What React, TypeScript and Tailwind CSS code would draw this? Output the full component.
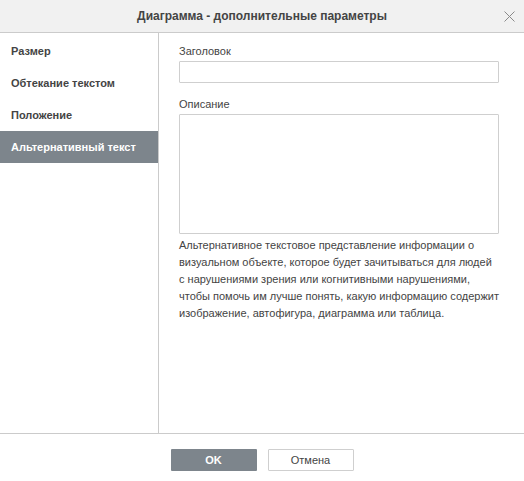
export default function App() {
  const items = ["Размер", "Обтекание текстом", "Положение", "Альтернативный текст"];
  const active = 3;

  return (
    <div className="w-[524px] h-[481px] bg-white flex flex-col text-[#444] font-['Liberation_Sans',Arial,sans-serif] text-[11px]">
      <div className="relative h-[33px] shrink-0 bg-[#f1f1f1] border-b border-[#cbcbcb] flex items-center justify-center">
        <span className="text-[12px] font-bold text-[#444]">Диаграмма - дополнительные параметры</span>
        <svg className="absolute right-[9px] top-[11px]" width="11" height="11" viewBox="0 0 11 11">
          <path d="M0.5 0.5 L10.5 10.5 M10.5 0.5 L0.5 10.5" stroke="#8a8a8a" strokeWidth="1" fill="none" />
        </svg>
      </div>

      <div className="flex flex-1 border-b border-[#cbcbcb]">
        <div className="w-[159px] shrink-0 border-r border-[#cbcbcb] pt-[2px] flex flex-col">
          {items.map((label, i) => (
            <div
              key={label}
              className={
                i === active
                  ? "h-[32px] flex items-center pl-[11px] font-bold bg-[#7d858c] text-white"
                  : "h-[32px] flex items-center pl-[11px] font-bold text-[#444]"
              }
            >
              {label}
            </div>
          ))}
        </div>

        <div className="flex-1 pl-[20px] pr-[25px] pt-[11px] flex flex-col">
          <label className="leading-[14px] mb-[3px]">Заголовок</label>
          <input className="h-[22px] w-[320px] border border-[#cfcfcf] rounded-[1px] outline-none" />
          <label className="leading-[14px] mt-[14px] mb-[3px]">Описание</label>
          <textarea className="h-[120px] w-[320px] border border-[#cfcfcf] rounded-[1px] outline-none resize-none" />
          <p className="mt-[3px] leading-[17px] w-[320px]">
            Альтернативное текстовое представление информации о визуальном объекте, которое будет зачитываться для людей с нарушениями зрения или когнитивными нарушениями, чтобы помочь им лучше понять, какую информацию содержит изображение, автофигура, диаграмма или таблица.
          </p>
        </div>
      </div>

      <div className="h-[47px] shrink-0 flex justify-center gap-[11px] pt-[15px]">
        <button className="w-[86px] h-[22px] bg-[#7d858c] text-white font-bold text-[11px] rounded-[1px]">OK</button>
        <button className="w-[86px] h-[22px] bg-white border border-[#cfcfcf] text-[#444] text-[11px] rounded-[1px]">Отмена</button>
      </div>
    </div>
  );
}
